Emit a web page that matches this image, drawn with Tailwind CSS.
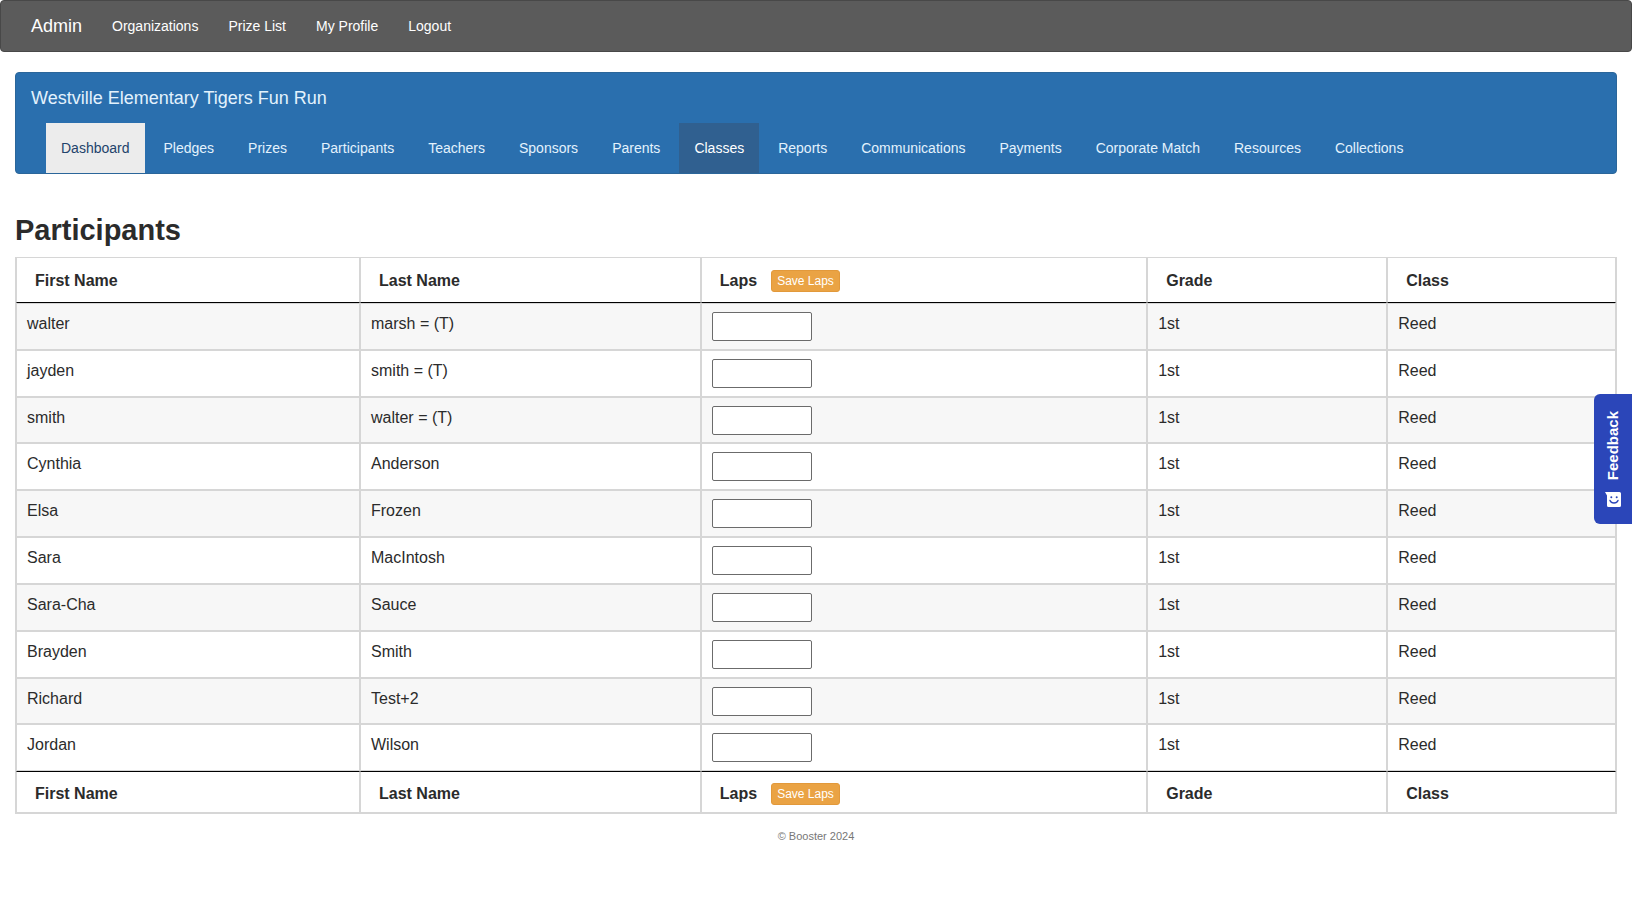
<!DOCTYPE html>
<html lang="en">
<head>
  <meta charset="utf-8">
  <meta name="viewport" content="width=device-width, initial-scale=1">
  <title>Participants - Westville Elementary Tigers Fun Run</title>
  <script src="https://cdn.jsdelivr.net/npm/@tailwindcss/browser@4"></script>
</head>
<body class="bg-white text-[#2b2b2b] font-['Liberation_Sans',Arial,sans-serif]">
  <!-- admin nav -->
  <nav class="flex flex-wrap items-center min-h-[52px] px-[15px] rounded-sm border border-[#484848] bg-[#5b5b5b] text-sm text-white" aria-label="Admin">
    <a href="#" class="px-[15px] text-lg">Admin</a>
    <a href="#" class="px-[15px]">Organizations</a>
    <a href="#" class="px-[15px]">Prize List</a>
    <a href="#" class="px-[15px]">My Profile</a>
    <a href="#" class="px-[15px]">Logout</a>
  </nav>

  <div class="px-[15px]">
    <!-- program nav -->
    <nav class="mt-5 rounded-sm border border-[#2b669a] bg-[#2a6fae] text-[#e3f2fd]" aria-label="Program">
      <a href="#" class="block px-[15px] text-lg leading-[50px]">Westville Elementary Tigers Fun Run</a>
      <ul class="flex flex-wrap gap-x-1 px-[30px] text-sm leading-[50px]">
        <li><a href="#" class="block px-[15px] bg-[#ececec] text-[#23436b]">Dashboard</a></li>
        <li><a href="#" class="block px-[15px]">Pledges</a></li>
        <li><a href="#" class="block px-[15px]">Prizes</a></li>
        <li><a href="#" class="block px-[15px]">Participants</a></li>
        <li><a href="#" class="block px-[15px]">Teachers</a></li>
        <li><a href="#" class="block px-[15px]">Sponsors</a></li>
        <li><a href="#" class="block px-[15px]">Parents</a></li>
        <li><a href="#" class="block px-[15px] bg-[#306090] text-white">Classes</a></li>
        <li><a href="#" class="block px-[15px]">Reports</a></li>
        <li><a href="#" class="block px-[15px]">Communications</a></li>
        <li><a href="#" class="block px-[15px]">Payments</a></li>
        <li><a href="#" class="block px-[15px]">Corporate Match</a></li>
        <li><a href="#" class="block px-[15px]">Resources</a></li>
        <li><a href="#" class="block px-[15px]">Collections</a></li>
      </ul>
    </nav>

    <main>
      <h2 class="mt-10 mb-[10px] text-[29px] leading-[33px] font-bold">Participants</h2>

      <table class="w-full table-fixed border-separate border-spacing-0 border border-[#d6d6d6] text-base leading-6 [&_th]:border-x [&_th]:border-[#d6d6d6] [&_th]:px-[18px] [&_th]:text-left [&_td]:border [&_td]:border-[#d6d6d6] [&_td]:px-[10px] [&_td]:pt-2 [&_td]:align-top">
        <colgroup>
          <col class="w-[21.5%]">
          <col class="w-[21.3%]">
          <col class="w-[27.9%]">
          <col class="w-[15%]">
          <col class="w-[14.3%]">
        </colgroup>
        <thead>
          <tr class="h-[45px] [&>th]:border-b [&>th]:border-b-black [&>th]:pt-[2px]">
            <th scope="col">First Name</th>
            <th scope="col">Last Name</th>
            <th scope="col"><div class="flex items-center gap-[14px]">Laps <button type="button" class="h-[22px] px-[5px] rounded-[3px] border border-[#e2993b] bg-[#eaa344] text-xs font-normal text-white">Save Laps</button></div></th>
            <th scope="col">Grade</th>
            <th scope="col">Class</th>
          </tr>
        </thead>
        <tbody class="[&>tr]:h-[47px] [&>tr:nth-child(6n+3)]:h-[46px] [&>tr:nth-child(odd)]:bg-[#f7f7f7] [&_input]:block [&_input]:w-[100px] [&_input]:h-[29px] [&_input]:px-1 [&_input]:rounded-xs [&_input]:border [&_input]:border-[#6b6b6b] [&_input]:bg-white">
          <tr><td>walter</td><td>marsh = (T)</td><td><input type="text" aria-label="Laps for walter marsh"></td><td>1st</td><td>Reed</td></tr>
          <tr><td>jayden</td><td>smith = (T)</td><td><input type="text" aria-label="Laps for jayden smith"></td><td>1st</td><td>Reed</td></tr>
          <tr><td>smith</td><td>walter = (T)</td><td><input type="text" aria-label="Laps for smith walter"></td><td>1st</td><td>Reed</td></tr>
          <tr><td>Cynthia</td><td>Anderson</td><td><input type="text" aria-label="Laps for Cynthia Anderson"></td><td>1st</td><td>Reed</td></tr>
          <tr><td>Elsa</td><td>Frozen</td><td><input type="text" aria-label="Laps for Elsa Frozen"></td><td>1st</td><td>Reed</td></tr>
          <tr><td>Sara</td><td>MacIntosh</td><td><input type="text" aria-label="Laps for Sara MacIntosh"></td><td>1st</td><td>Reed</td></tr>
          <tr><td>Sara-Cha</td><td>Sauce</td><td><input type="text" aria-label="Laps for Sara-Cha Sauce"></td><td>1st</td><td>Reed</td></tr>
          <tr><td>Brayden</td><td>Smith</td><td><input type="text" aria-label="Laps for Brayden Smith"></td><td>1st</td><td>Reed</td></tr>
          <tr><td>Richard</td><td>Test+2</td><td><input type="text" aria-label="Laps for Richard Test+2"></td><td>1st</td><td>Reed</td></tr>
          <tr><td>Jordan</td><td>Wilson</td><td><input type="text" aria-label="Laps for Jordan Wilson"></td><td>1st</td><td>Reed</td></tr>
        </tbody>
        <tfoot>
          <tr class="h-[42px] [&>th]:border-y [&>th]:border-t-black [&>th]:pt-1">
            <th scope="col">First Name</th>
            <th scope="col">Last Name</th>
            <th scope="col"><div class="flex items-center gap-[14px]">Laps <button type="button" class="h-[22px] px-[5px] rounded-[3px] border border-[#e2993b] bg-[#eaa344] text-xs font-normal text-white">Save Laps</button></div></th>
            <th scope="col">Grade</th>
            <th scope="col">Class</th>
          </tr>
        </tfoot>
      </table>
    </main>

    <footer class="mt-[14px] text-center text-[11px] leading-4 text-[#777]">© Booster 2024</footer>
  </div>

  <!-- feedback tab -->
  <button type="button" class="fixed right-0 top-[394px] flex flex-col items-center justify-center gap-3 w-[38px] h-[130px] rounded-l-md bg-[#2b46b9] text-[15px] leading-5 font-bold text-white">
    <span class="[writing-mode:vertical-rl] rotate-180">Feedback</span>
    <svg class="w-4 h-[15px]" viewBox="0 0 16 15" aria-hidden="true">
      <path d="M0 0h14.500a1.500 1.500 0 0 1 1.500 1.500v12a1.500 1.500 0 0 1-1.500 1.500h-11a1.500 1.500 0 0 1-1.500-1.500V3.500z" fill="#fff"/>
      <circle cx="6.300" cy="5.300" r="1" fill="#2b46b9"/>
      <circle cx="11.700" cy="5.300" r="1" fill="#2b46b9"/>
      <path d="M5 8.500c1.300 3.300 6.700 3.300 8 0" fill="none" stroke="#2b46b9" stroke-width="1.400" stroke-linecap="round"/>
    </svg>
  </button>
</body>
</html>
